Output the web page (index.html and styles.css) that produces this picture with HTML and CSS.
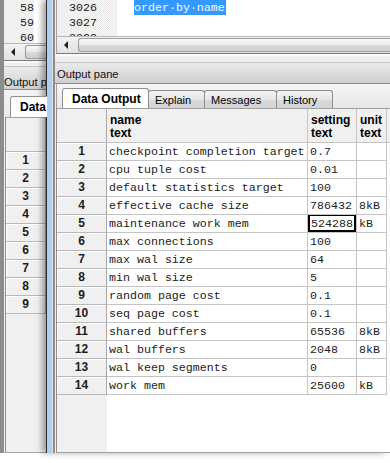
FILE: index.html
```html
<!DOCTYPE html>
<html lang="en">
<head>
  <meta charset="UTF-8" />
  <title>Output pane</title>
  <link rel="stylesheet" href="styles.css">
</head>
<body>
<div class="desk">

  <!-- window behind, mostly covered -->
  <div class="win win-back">
    <div class="editor">
      <div class="gutter">
        <div class="nums"><div>58</div><div>59</div><div>60</div></div>
      </div>
      <div class="code"></div>
    </div>
    <div class="hscroll">
      <div class="arrow"><span></span></div>
      <div class="thumb"></div>
    </div>
    <div class="frame-gap"></div>
    <div class="pane-title">Output pane</div>
    <div class="tabs">
      <div class="tab active">Data Output</div>
    </div>
    <div class="grid">
      <table>
        <tr class="head"><th class="rh"></th><th class="c-name">name<br>text</th></tr>
        <tr><td class="rh">1</td><td></td></tr>
        <tr><td class="rh">2</td><td></td></tr>
        <tr><td class="rh">3</td><td></td></tr>
        <tr><td class="rh">4</td><td></td></tr>
        <tr><td class="rh">5</td><td></td></tr>
        <tr><td class="rh">6</td><td></td></tr>
        <tr><td class="rh">7</td><td></td></tr>
        <tr><td class="rh">8</td><td></td></tr>
        <tr><td class="rh">9</td><td></td></tr>
      </table>
    </div>
  </div>

  <!-- front window -->
  <div class="win win-front">
    <div class="inner">
      <div class="editor">
        <div class="gutter">
          <div class="nums"><div>3026</div><div>3027</div><div>3028</div></div>
          <div class="fold"></div>
        </div>
        <div class="code"><span class="sel">order·by·name</span></div>
      </div>
      <div class="hscroll">
        <div class="arrow"><span></span></div>
        <div class="thumb"></div>
      </div>
      <div class="frame-gap"></div>
      <div class="pane-title">Output pane</div>
      <div class="tabs">
        <div class="tab active t1">Data Output</div>
        <div class="tab t2">Explain</div>
        <div class="tab t3">Messages</div>
        <div class="tab t4">History</div>
      </div>
      <div class="grid">
        <table>
          <tr class="head">
            <th class="rh"></th>
            <th class="c-name">name<br>text</th>
            <th class="c-set">setting<br>text</th>
            <th class="c-unit">unit<br>text</th>
            <th class="fill"></th>
          </tr>
          <tr><td class="rh">1</td><td>checkpoint completion target</td><td>0.7</td><td></td><td class="fill"></td></tr>
          <tr><td class="rh">2</td><td>cpu tuple cost</td><td>0.01</td><td></td><td class="fill"></td></tr>
          <tr><td class="rh">3</td><td>default statistics target</td><td>100</td><td></td><td class="fill"></td></tr>
          <tr><td class="rh">4</td><td>effective cache size</td><td>786432</td><td>8kB</td><td class="fill"></td></tr>
          <tr><td class="rh">5</td><td>maintenance work mem</td><td class="focus"><span>524288</span></td><td>kB</td><td class="fill"></td></tr>
          <tr><td class="rh">6</td><td>max connections</td><td>100</td><td></td><td class="fill"></td></tr>
          <tr><td class="rh">7</td><td>max wal size</td><td>64</td><td></td><td class="fill"></td></tr>
          <tr><td class="rh">8</td><td>min wal size</td><td>5</td><td></td><td class="fill"></td></tr>
          <tr><td class="rh">9</td><td>random page cost</td><td>0.1</td><td></td><td class="fill"></td></tr>
          <tr><td class="rh">10</td><td>seq page cost</td><td>0.1</td><td></td><td class="fill"></td></tr>
          <tr><td class="rh">11</td><td>shared buffers</td><td>65536</td><td>8kB</td><td class="fill"></td></tr>
          <tr><td class="rh">12</td><td>wal buffers</td><td>2048</td><td>8kB</td><td class="fill"></td></tr>
          <tr><td class="rh">13</td><td>wal keep segments</td><td>0</td><td></td><td class="fill"></td></tr>
          <tr><td class="rh">14</td><td>work mem</td><td>25600</td><td>kB</td><td class="fill"></td></tr>
        </table>
      </div>
    </div>
  </div>

</div>
</body>
</html>
```

FILE: styles.css
```css
body {
  margin: 0;
  background: #fff;
  font-family: "Liberation Sans", Arial, sans-serif;
  font-size: 11px;
  color: #000;
}

.desk {
  position: relative;
  width: 390px;
  height: 463px;
  overflow: hidden;
  background: #fff;
}

.win {
  position: absolute;
  top: 0;
  display: flex;
  flex-direction: column;
  background: #f0f0f0;
  overflow: hidden;
  box-sizing: border-box;
}

/* ---- back window ---- */
.win-back {
  left: 0;
  width: 47px;
  height: 453px;
  border-left: 4px solid #8c8c8c;
}

.win-back .editor { height: 43px; }
.win-back .gutter { width: 60px; }
.win-back .nums { width: 30px; }
.win-back .frame-gap { height: 5px; }
.win-back .pane-title { height: 22px; line-height: 30px; }
.win-back .tabs { height: 27px; padding-left: 6px; }
.win-back .tab.active { width: 60px; height: 21px; }
.win-back .grid { margin-left: 1px; }
.win-back th { height: 34px; }
.win-back .rh { width: 40px; }

/* ---- front window ---- */
.win-front {
  left: 47px;
  width: 343px;
  height: 453px;
  border-left: 5px solid #aecff0;
  box-shadow: -1px 0 0 #2c2c2c, -5px 0 6px rgba(0, 0, 0, 0.35);
}

.inner {
  flex: 1;
  display: flex;
  flex-direction: column;
  border-left: 1px solid #dedede;
  box-shadow: inset 2px 0 0 #8d8d8d;
  padding-left: 2px;
  min-height: 0;
}

.win-front .editor {
  height: 36px;
  margin-left: 1px;
  border-left: 1px solid #a0a0a0;
}

.win-front .pane-title { padding-left: 2px; line-height: 22px; }

/* ---- editor ---- */
.editor {
  display: flex;
  background: #fff;
  font-family: "Liberation Mono", "Courier New", monospace;
  font-size: 11.65px;
  flex-shrink: 0;
}

.gutter {
  display: flex;
  background: #f0f0f0;
}

.nums {
  width: 40px;
  text-align: right;
  line-height: 15px;
  color: #1a1a1a;
}

.fold {
  width: 20px;
  background: repeating-conic-gradient(#e6e6e6 0 25%, #fbfbfb 0 50%) 0 0 / 2px 2px;
}

.code {
  flex: 1;
  padding-left: 17px;
  line-height: 15px;
}

.sel {
  display: inline-block;
  background: #3399ff;
  color: #f4f8ff;
  padding-right: 1px;
}

/* ---- scrollbar ---- */
.hscroll {
  height: 16px;
  display: flex;
  flex-shrink: 0;
  border-top: 1px solid #b8b8b8;
  border-bottom: 1px solid #7a7a7a;
  background: linear-gradient(#f2f2f2, #e2e2e2);
}

.win-front .hscroll { margin-left: 1px; border-left: 1px solid #a0a0a0; }

.arrow {
  width: 18px;
  display: flex;
  align-items: center;
  justify-content: center;
}

.arrow span {
  width: 0;
  height: 0;
  border-top: 4px solid transparent;
  border-bottom: 4px solid transparent;
  border-right: 4px solid #202020;
}

.thumb {
  flex: 1;
  margin: 1px 0 1px 3px;
  border: 1px solid #9c9c9c;
  border-right: 0;
  border-radius: 3px 0 0 3px;
  background: linear-gradient(#f8f8f8 0, #ececec 45%, #d8d8d8 55%, #d0d0d0 100%);
}

.frame-gap {
  height: 8px;
  flex-shrink: 0;
  border-top: 2px solid #fafafa;
  box-sizing: border-box;
}

/* ---- pane title ---- */
.pane-title {
  height: 20px;
  line-height: 20px;
  flex-shrink: 0;
  white-space: nowrap;
  color: #111;
  font-size: 11.2px;
  background: linear-gradient(#ececec, #d9d9d9 60%, #cfcfcf);
  border-top: 1px solid #c4c4c4;
  border-bottom: 1px solid #8c8c8c;
}

/* ---- tabs ---- */
.tabs {
  height: 24px;
  flex-shrink: 0;
  display: flex;
  align-items: flex-end;
  padding-left: 5px;
  background: linear-gradient(#f4f4f4, #e8e8e8);
  box-sizing: border-box;
}

.win-front .tabs { border-left: 1px solid #a0a0a0; margin-left: 1px; }

.tab {
  height: 18px;
  line-height: 18px;
  box-sizing: border-box;
  border: 1px solid #8e8f8f;
  border-bottom: 0;
  border-radius: 3px 3px 0 0;
  margin-right: -1px;
  padding-left: 6px;
  white-space: nowrap;
  background: linear-gradient(#f2f2f2, #e6e6e6 50%, #d9d9d9 51%, #d4d4d4);
}

.tab.active {
  height: 20px;
  line-height: 20px;
  background: #fff;
  font-weight: bold;
  font-size: 12px;
  padding-left: 9px;
  position: relative;
  z-index: 1;
}

.t1 { width: 87px; }
.t2 { width: 57px; }
.t3 { width: 73px; }
.t4 { width: 57px; }

/* ---- data grid ---- */
.grid {
  flex: 1;
  background: linear-gradient(to right, #f0f0f0 50px, #fff 50px);
  border-top: 1px solid #a0a0a0;
  border-left: 1px solid #8e8e8e;
  border-bottom: 1px solid #a4a4a4;
  margin-left: 1px;
  overflow: hidden;
}

.win-back .grid { background: #f0f0f0; }

table {
  border-collapse: separate;
  border-spacing: 0;
  table-layout: fixed;
  width: 100%;
}

th, td {
  padding: 0 0 0 2px;
  border-right: 1px solid #c4c4c4;
  border-bottom: 1px solid #c4c4c4;
  box-sizing: border-box;
  white-space: nowrap;
  overflow: hidden;
}

td {
  height: 18px;
  line-height: 17px;
  font-family: "Liberation Mono", "Courier New", monospace;
  font-size: 11.65px;
  color: #1c1c1c;
  background: #fff;
}

th {
  height: 34px;
  text-align: left;
  vertical-align: top;
  padding: 5px 0 0 3px;
  line-height: 13px;
  font-size: 12px;
  background: #f0f0f0;
}

.rh {
  width: 50px;
  text-align: center;
  padding: 0;
  font-family: "Liberation Sans", Arial, sans-serif;
  font-weight: bold;
  font-size: 12px;
  background: #f0f0f0;
  border-right-color: #a8a8a8;
  border-bottom-color: #b8b8b8;
  box-shadow: inset 1px 1px 0 #fff;
}

th.rh { box-shadow: none; }

.c-name { width: 201px; }
.c-set { width: 49px; }
.c-unit { width: 30px; }

th.fill { border-right: 0; }
td.fill { border: 0; background: transparent; }

.focus { padding: 0; }

.focus span {
  display: block;
  height: 18px;
  margin-top: -1px;
  padding-left: 1px;
  border: 2px solid #000;
  box-sizing: border-box;
  line-height: 15px;
}
```
